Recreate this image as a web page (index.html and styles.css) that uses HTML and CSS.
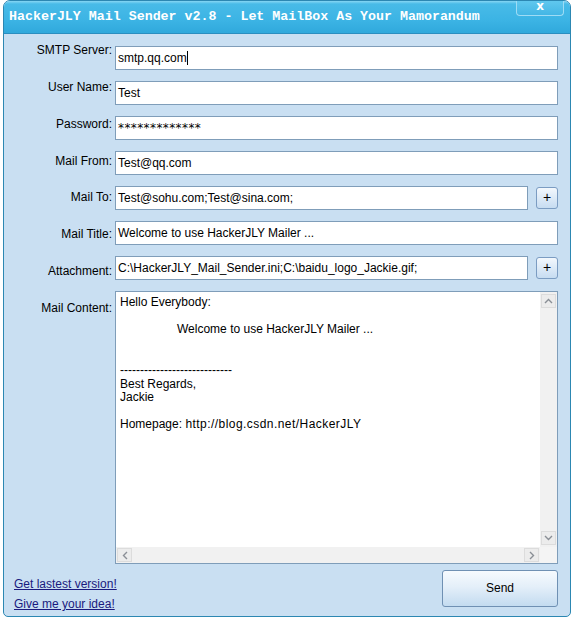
FILE: index.html
```html
<!DOCTYPE html>
<html lang="en">
<head>
    <meta charset="UTF-8">
    <title>HackerJLY Mail Sender v2.8</title>
    <link rel="stylesheet" href="styles.css">
</head>
<body>
    <div class="window">
        <!-- Title bar -->
        <div class="titlebar">
            <span class="title">HackerJLY Mail Sender v2.8 - Let MailBox As Your Mamorandum</span>
            <div class="close-btn">x</div>
        </div>

        <div class="client">
            <div class="form">
                <div class="labels">
                    <div class="label">SMTP Server:</div>
                    <div class="label">User Name:</div>
                    <div class="label">Password:</div>
                    <div class="label">Mail From:</div>
                    <div class="label">Mail To:</div>
                    <div class="label">Mail Title:</div>
                    <div class="label">Attachment:</div>
                    <div class="label">Mail Content:</div>
                </div>

                <div class="fields">
                    <div class="input">smtp.qq.com<span class="caret"></span></div>
                    <div class="input">Test</div>
                    <div class="input password">*************</div>
                    <div class="input">Test@qq.com</div>
                    <div class="row">
                        <div class="input">Test@sohu.com;Test@sina.com;</div>
                        <div class="plus-btn">+</div>
                    </div>
                    <div class="input">Welcome to use HackerJLY Mailer ...</div>
                    <div class="row">
                        <div class="input">C:\HackerJLY_Mail_Sender.ini;C:\baidu_logo_Jackie.gif;</div>
                        <div class="plus-btn">+</div>
                    </div>

                    <!-- Mail content with scrollbars -->
                    <div class="memo">
                        <div class="memo-text">Hello Everybody:

<span class="tab"></span>Welcome to use HackerJLY Mailer ...


----------------------------
Best Regards,
Jackie

Homepage: <span class="url">http://blog.csdn.net/HackerJLY</span></div>
                        <div class="vscroll">
                            <div class="arrow">
                                <svg width="9" height="6" viewBox="0 0 9 6"><path d="M1 5 L4.5 1.5 L8 5" fill="none" stroke="#8a8f96" stroke-width="1.4"/></svg>
                            </div>
                            <div class="arrow">
                                <svg width="9" height="6" viewBox="0 0 9 6"><path d="M1 1 L4.5 4.5 L8 1" fill="none" stroke="#8a8f96" stroke-width="1.4"/></svg>
                            </div>
                        </div>
                        <div class="hscroll">
                            <div class="arrow">
                                <svg width="6" height="9" viewBox="0 0 6 9"><path d="M5 1 L1.5 4.5 L5 8" fill="none" stroke="#8a8f96" stroke-width="1.4"/></svg>
                            </div>
                            <div class="arrow">
                                <svg width="6" height="9" viewBox="0 0 6 9"><path d="M1 1 L4.5 4.5 L1 8" fill="none" stroke="#8a8f96" stroke-width="1.4"/></svg>
                            </div>
                        </div>
                        <div class="corner"></div>
                    </div>
                </div>
            </div>

            <div class="footer">
                <div class="links">
                    <a href="#">Get lastest version!</a>
                    <a href="#">Give me your idea!</a>
                </div>
                <div class="send-btn">Send</div>
            </div>
        </div>
    </div>
</body>
</html>
```

FILE: styles.css
```css
body {
    margin: 0;
    background-color: #ffffff;
    font-family: "Liberation Sans", Arial, sans-serif;
    font-size: 12px;
    color: #000;
}
.window {
    margin-left: 3px;
    width: 568px;
    height: 617px;
    box-sizing: border-box;
    border: 1px solid #2c87b2;
    border-radius: 7px 7px 5px 5px;
    overflow: hidden;
    display: flex;
    flex-direction: column;
    background-color: #c9dff2;
}
.titlebar {
    height: 32px;
    flex-shrink: 0;
    display: flex;
    align-items: flex-start;
    justify-content: space-between;
    padding-left: 5px;
    background: linear-gradient(#86d6f4 0px, #48bbe8 3px, #3bb3e4 20px, #30a9dc 32px);
    border-bottom: 1px solid #2a8ec0;
}
.title {
    font-family: "Liberation Mono", "Courier New", monospace;
    font-weight: bold;
    font-size: 13.3px;
    color: #ffffff;
    margin-top: 8px;
    white-space: nowrap;
}
.close-btn {
    width: 48px;
    height: 16px;
    margin-right: 6px;
    margin-top: -1px;
    box-sizing: border-box;
    border: 1px solid #9edcf5;
    border-top: none;
    border-radius: 0 0 4px 4px;
    background: linear-gradient(#62c9ef, #43b6e5);
    color: #ffffff;
    font-family: "DejaVu Sans", sans-serif;
    font-weight: bold;
    font-size: 12px;
    line-height: 13px;
    text-align: center;
}
.client {
    flex: 1;
    display: flex;
    flex-direction: column;
    padding-right: 12px;
}
.form {
    display: grid;
    grid-template-columns: 108px 1fr;
    column-gap: 3px;
}
.labels {
    display: flex;
    flex-direction: column;
    gap: 22.85px;
    padding-top: 9px;
}
.label {
    text-align: right;
    line-height: 14px;
    white-space: nowrap;
}
.fields {
    display: flex;
    flex-direction: column;
    gap: 11px;
    padding-top: 12px;
}
.input {
    height: 24px;
    box-sizing: border-box;
    border: 1px solid #7f9db9;
    background-color: #ffffff;
    padding: 0 2px;
    line-height: 22px;
    white-space: nowrap;
    overflow: hidden;
}
.password {
    font-family: "DejaVu Sans", sans-serif;
    letter-spacing: 0.4px;
}
.caret {
    display: inline-block;
    width: 1px;
    height: 14px;
    background-color: #000;
    vertical-align: -3px;
}
.row {
    display: flex;
    align-items: center;
    gap: 8px;
}
.row .input {
    flex: 1;
}
.plus-btn {
    width: 22px;
    height: 22px;
    box-sizing: border-box;
    border: 1px solid #7b9cc2;
    border-radius: 3px;
    background: linear-gradient(#f3f8fd, #c6dcf1);
    text-align: center;
    line-height: 19px;
    font-size: 14px;
}
.memo {
    height: 273px;
    box-sizing: border-box;
    border: 1px solid #7f9db9;
    background-color: #ffffff;
    display: grid;
    grid-template-columns: 1fr 17px;
    grid-template-rows: 1fr 16px;
}
.memo-text {
    white-space: pre;
    line-height: 13.6px;
    padding: 4px 4px 0;
    overflow: hidden;
}
.url {
    letter-spacing: 0.45px;
}
.tab {
    display: inline-block;
    width: 57px;
}
.vscroll {
    background-color: #f1f1f1;
    display: flex;
    flex-direction: column;
    justify-content: space-between;
    align-items: center;
    padding: 2px 0;
}
.hscroll {
    background-color: #f1f1f1;
    display: flex;
    justify-content: space-between;
    align-items: center;
    padding: 0 1px;
}
.arrow {
    width: 15px;
    height: 14px;
    box-sizing: border-box;
    border: 1px solid #dcdcdc;
    background-color: #ececec;
    display: flex;
    align-items: center;
    justify-content: center;
}
.corner {
    background-color: #f4f4f4;
}
.footer {
    display: flex;
    justify-content: space-between;
    align-items: flex-start;
    margin-top: 6px;
}
.links {
    display: flex;
    flex-direction: column;
    padding-left: 10px;
    padding-top: 4px;
}
.links a {
    font-size: 12px;
    line-height: 20px;
    color: #1a1a7e;
}
.send-btn {
    width: 116px;
    height: 37px;
    box-sizing: border-box;
    border: 1px solid #6f90b3;
    border-radius: 3px;
    background: linear-gradient(#f6fafe, #e4eff9 45%, #c3dbf0);
    text-align: center;
    line-height: 35px;
}
```
